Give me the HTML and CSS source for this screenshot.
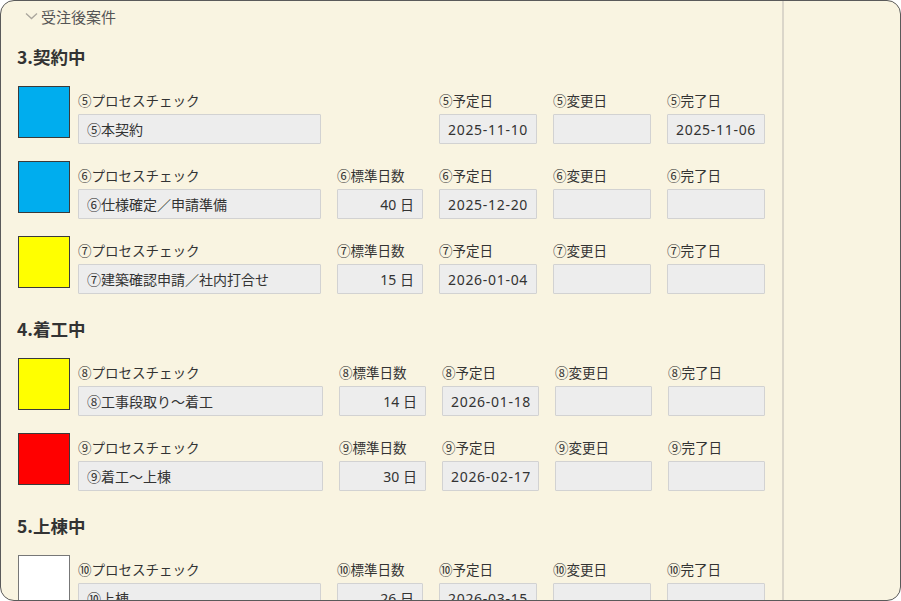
FILE: index.html
```html
<!DOCTYPE html>
<html lang="ja">
<head>
<meta charset="utf-8">
<title>受注後案件</title>
<link rel="stylesheet" href="styles.css">
</head>
<body>
<div class="window">
  <div class="main">
    <div class="fold">
      <svg class="chev" width="13" height="8" viewBox="0 0 13 8"><path d="M1 1.5 L6.5 6.5 L12 1.5" fill="none" stroke="#aaa69d" stroke-width="1.3"/></svg>
      <span>受注後案件</span>
    </div>

    <div class="section">
      <h3>3.契約中</h3>
      <div class="row">
        <div class="swatch blue"></div>
        <div class="field f-proc"><label>⑤プロセスチェック</label><input type="text" class="box jp" value="⑤本契約" readonly></div>
        <div class="field f-days"></div>
        <div class="field f-date"><label>⑤予定日</label><input type="text" class="box date" value="2025-11-10" readonly></div>
        <div class="field f-date"><label>⑤変更日</label><input type="text" class="box date" value="" readonly></div>
        <div class="field f-date"><label>⑤完了日</label><input type="text" class="box date" value="2025-11-06" readonly></div>
      </div>
      <div class="row">
        <div class="swatch blue"></div>
        <div class="field f-proc"><label>⑥プロセスチェック</label><input type="text" class="box jp" value="⑥仕様確定／申請準備" readonly></div>
        <div class="field f-days"><label>⑥標準日数</label><input type="text" class="box num" value="40 日" readonly></div>
        <div class="field f-date"><label>⑥予定日</label><input type="text" class="box date" value="2025-12-20" readonly></div>
        <div class="field f-date"><label>⑥変更日</label><input type="text" class="box date" value="" readonly></div>
        <div class="field f-date"><label>⑥完了日</label><input type="text" class="box date" value="" readonly></div>
      </div>
      <div class="row">
        <div class="swatch yellow"></div>
        <div class="field f-proc"><label>⑦プロセスチェック</label><input type="text" class="box jp" value="⑦建築確認申請／社内打合せ" readonly></div>
        <div class="field f-days"><label>⑦標準日数</label><input type="text" class="box num" value="15 日" readonly></div>
        <div class="field f-date"><label>⑦予定日</label><input type="text" class="box date" value="2026-01-04" readonly></div>
        <div class="field f-date"><label>⑦変更日</label><input type="text" class="box date" value="" readonly></div>
        <div class="field f-date"><label>⑦完了日</label><input type="text" class="box date" value="" readonly></div>
      </div>
    </div>

    <div class="section wide">
      <h3>4.着工中</h3>
      <div class="row">
        <div class="swatch yellow"></div>
        <div class="field f-proc"><label>⑧プロセスチェック</label><input type="text" class="box jp" value="⑧工事段取り～着工" readonly></div>
        <div class="field f-days"><label>⑧標準日数</label><input type="text" class="box num" value="14 日" readonly></div>
        <div class="field f-date"><label>⑧予定日</label><input type="text" class="box date" value="2026-01-18" readonly></div>
        <div class="field f-date"><label>⑧変更日</label><input type="text" class="box date" value="" readonly></div>
        <div class="field f-date"><label>⑧完了日</label><input type="text" class="box date" value="" readonly></div>
      </div>
      <div class="row">
        <div class="swatch red"></div>
        <div class="field f-proc"><label>⑨プロセスチェック</label><input type="text" class="box jp" value="⑨着工～上棟" readonly></div>
        <div class="field f-days"><label>⑨標準日数</label><input type="text" class="box num" value="30 日" readonly></div>
        <div class="field f-date"><label>⑨予定日</label><input type="text" class="box date" value="2026-02-17" readonly></div>
        <div class="field f-date"><label>⑨変更日</label><input type="text" class="box date" value="" readonly></div>
        <div class="field f-date"><label>⑨完了日</label><input type="text" class="box date" value="" readonly></div>
      </div>
    </div>

    <div class="section">
      <h3>5.上棟中</h3>
      <div class="row">
        <div class="swatch white"></div>
        <div class="field f-proc"><label>⑩プロセスチェック</label><input type="text" class="box jp" value="⑩上棟" readonly></div>
        <div class="field f-days"><label>⑩標準日数</label><input type="text" class="box num" value="26 日" readonly></div>
        <div class="field f-date"><label>⑩予定日</label><input type="text" class="box date" value="2026-03-15" readonly></div>
        <div class="field f-date"><label>⑩変更日</label><input type="text" class="box date" value="" readonly></div>
        <div class="field f-date"><label>⑩完了日</label><input type="text" class="box date" value="" readonly></div>
      </div>
    </div>
  </div>
  <div class="side"></div>
</div>
</body>
</html>
```

FILE: styles.css
```css
body {
  margin: 0;
  background: #fff;
  font-family: "Noto Sans CJK JP", "Noto Sans", sans-serif;
  color: #333;
}

.window {
  box-sizing: border-box;
  width: 901px;
  height: 601px;
  border: 1px solid #5a5a5a;
  border-radius: 14px;
  overflow: hidden;
  display: flex;
  background: #f9f4e1;
}

.main {
  width: 781px;
  flex: none;
  padding: 5px 0 0 16px;
  box-sizing: border-box;
}

.side {
  flex: 1;
  border-left: 2px solid #dbd6ca;
}

.fold {
  display: flex;
  align-items: center;
  height: 20px;
  margin-bottom: 19px;
  padding-left: 8px;
  font-size: 15px;
  color: #555;
}
.chev {
  margin-right: 3px;
}

h3 {
  margin: 0 0 17px;
  font-size: 17.5px;
  line-height: 24px;
  font-weight: bold;
  color: #333;
}

.section {
  margin-bottom: 23px;
}

.row {
  display: flex;
  align-items: flex-start;
  gap: 16px;
  margin: 0 0 17px 1px;
}
.row:last-child {
  margin-bottom: 0;
}

.swatch {
  box-sizing: border-box;
  width: 52px;
  height: 52px;
  border: 1px solid #3a3a3a;
  margin-right: -8px;
}
.blue { background: #00adee; }
.yellow { background: #ffff00; }
.red { background: #ff0000; }
.white { background: #fff; border-color: #777; }

.field {
  padding-top: 4px;
}
.field label {
  display: block;
  font-size: 13.5px;
  line-height: 20px;
  margin-bottom: 4px;
  white-space: nowrap;
  font-feature-settings: "fwid" 1;
}

.f-proc { width: 243px; }
.f-days { width: 86px; }
.f-date { width: 98px; }
.wide .f-proc { width: 245px; }
.wide .f-days { width: 87px; }
.wide .f-date { width: 97px; }

.box {
  display: block;
  box-sizing: border-box;
  width: 100%;
  height: 30px;
  margin: 0;
  padding: 0 8px;
  border: 1px solid #d2d2d2;
  border-radius: 1px;
  background: #ededed;
  font-family: "Noto Sans", "Noto Sans CJK JP", sans-serif;
  font-size: 14px;
  color: #333;
  outline: none;
}
.jp {
  font-family: "Noto Sans CJK JP", sans-serif;
  font-feature-settings: "fwid" 1;
}
.date {
  letter-spacing: 0.7px;
}
.num {
  text-align: right;
}
```
